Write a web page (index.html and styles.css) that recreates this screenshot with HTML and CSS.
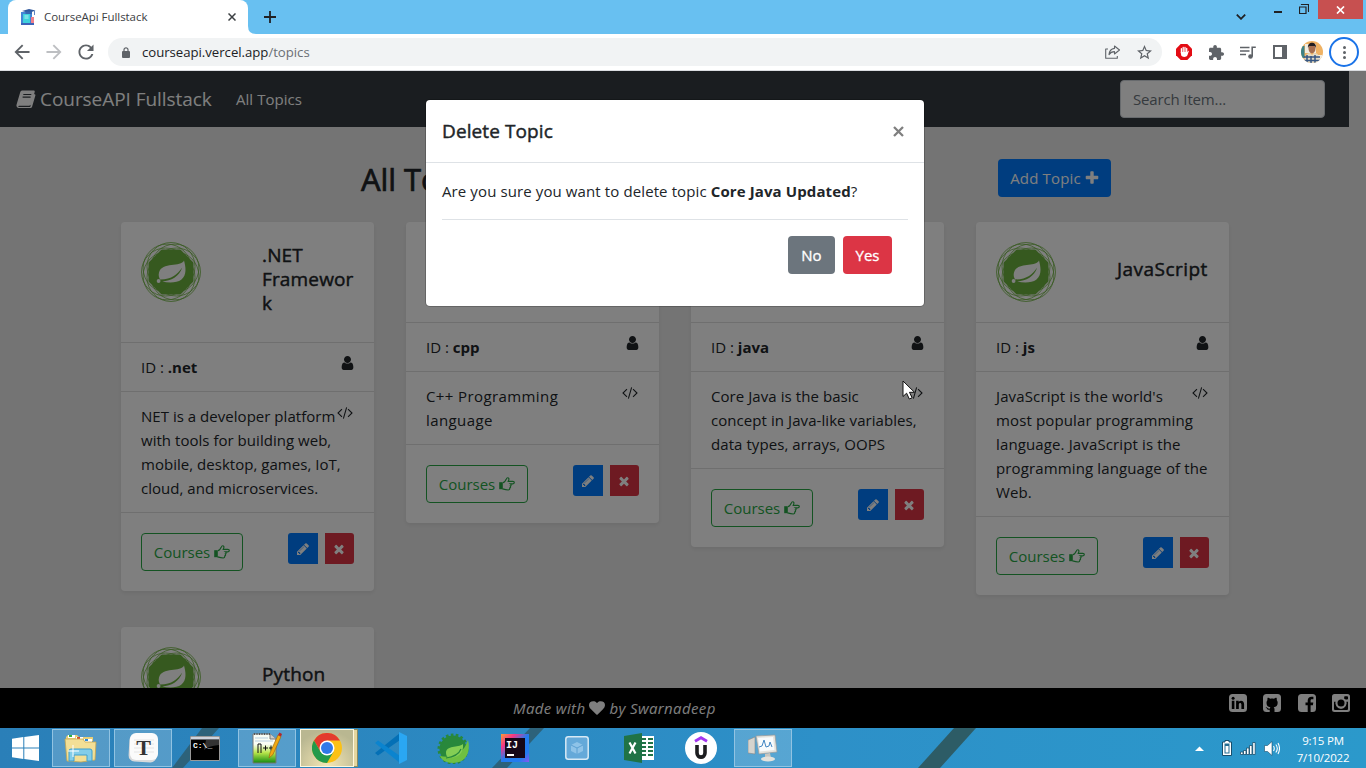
FILE: index.html
```html
<!DOCTYPE html>
<html lang="en">
<head>
<meta charset="utf-8">
<title>CourseApi Fullstack</title>
<link rel="stylesheet" href="styles.css">
</head>
<body>
<svg class="sprite" aria-hidden="true">
  <symbol id="times" viewBox="0 0 1792 1792"><path d="M1490 1322q0 40-28 68l-136 136q-28 28-68 28t-68-28l-294-294-294 294q-28 28-68 28t-68-28l-136-136q-28-28-28-68t28-68l294-294-294-294q-28-28-28-68t28-68l136-136q28-28 68-28t68 28l294 294 294-294q28-28 68-28t68 28l136 136q28 28 28 68t-28 68l-294 294 294 294q28 28 28 68z"/></symbol>
  <symbol id="plus" viewBox="0 0 1792 1792"><path d="M1600 736v192q0 40-28 68t-68 28h-416v416q0 40-28 68t-68 28h-192q-40 0-68-28t-28-68v-416h-416q-40 0-68-28t-28-68v-192q0-40 28-68t68-28h416v-416q0-40 28-68t68-28h192q40 0 68 28t28 68v416h416q40 0 68 28t28 68z"/></symbol>
  <symbol id="user" viewBox="256 128 1280 1536"><path d="M1536 1399q0 109-62.5 187t-150.5 78h-854q-88 0-150.5-78t-62.5-187q0-85 8.5-160.5t31.5-152 58.5-131 94-89 134.5-34.5q131 128 313 128t313-128q76 0 134.5 34.5t94 89 58.5 131 31.5 152 8.5 160.5zm-256-887q0 159-112.5 271.5t-271.5 112.5-271.5-112.5-112.5-271.5 112.5-271.5 271.5-112.5 271.5 112.5 112.5 271.5z"/></symbol>
  <symbol id="pencil" viewBox="0 0 1792 1792"><path d="M491 1536l91-91-235-235-91 91v107h128v128h107zm523-928q0-22-22-22-10 0-17 7l-542 542q-7 7-7 17 0 22 22 22 10 0 17-7l542-542q7-7 7-17zm-54-192l416 416-832 832h-416v-416zm683 96q0 53-37 90l-166 166-416-416 166-165q36-38 90-38 53 0 91 38l235 234q37 39 37 91z"/></symbol>
  <symbol id="code" viewBox="64 256 1920 1408"><path d="M681 1399l-50 50q-10 10-23 10t-23-10l-466-466q-10-10-10-23t10-23l466-466q10-10 23-10t23 10l50 50q10 10 10 23t-10 23l-393 393 393 393q10 10 10 23t-10 23zm591-1067l-373 1291q-4 13-15.5 19.5t-23.5 2.5l-62-17q-13-4-19.5-15.5t-2.5-24.5l373-1291q4-13 15.5-19.5t23.5-2.5l62 17q13 4 19.5 15.5t2.5 24.5zm657 651l-466 466q-10 10-23 10t-23-10l-50-50q-10-10-10-23t10-23l393-393-393-393q-10-10-10-23t10-23l50-50q10-10 23-10t23 10l466 466q10 10 10 23t-10 23z"/></symbol>
  <symbol id="heart" viewBox="0 128 1792 1536"><path d="M896 1664q-26 0-44-18l-624-602q-10-8-27.5-26t-55.5-65.5-68-97.5-53.5-121-23.5-138q0-220 127-344t351-124q62 0 126.5 21.5t120 58 95.5 68.5 76 68q36-36 76-68t95.5-68.5 120-58 126.5-21.5q224 0 351 124t127 344q0 221-229 450l-623 600q-18 18-44 18z"/></symbol>
  <symbol id="hand" viewBox="0 0 16 14"><path d="M.2 5.2h3.6v7H.2z"/><path d="M4 5.6c1.6 0 2.6-2 3.2-3.3C7.600 1 8 .7 8.700.7c1.200 0 1.500 1.200 1 2.400l-.5 1.200h4.700c1.900 0 1.900 2.500 0 2.500h-2.500c1.100.7.8 2-.1 2.200.6.9.2 1.800-.6 2 .3 1.200-.4 2-1.500 2-2 0-2.700-.2-5.700-1.100" fill="none" stroke="#28a745" stroke-width="1.150"/></symbol>
  <symbol id="spring" viewBox="0 0 60 60">
    <g fill="none" stroke="#6db33f" stroke-width=".75"><circle cx="30" cy="24.500" r="24"/><circle cx="33.900" cy="26.100" r="24"/><circle cx="35.500" cy="30" r="24"/><circle cx="33.900" cy="33.900" r="24"/><circle cx="30" cy="35.500" r="24"/><circle cx="26.100" cy="33.900" r="24"/><circle cx="24.500" cy="30" r="24"/><circle cx="26.100" cy="26.100" r="24"/></g>
    <path fill="#6db33f" d="M21 8.500h18L51.500 21v18L39 51.500H21L8.500 39V21z" stroke="#6db33f" stroke-width="2" stroke-linejoin="round"/>
    <path fill="#fff" d="M43 18.500c-3 7-22 1-25 12-.8 3 .1 5.500 1.200 7 12-.2 17-5 22-12-3 9-11 13.500-20 14 7 1.500 15 1.200 19-1.800 6-4.500 4.500-13 2.800-19.200z"/><circle cx="17.600" cy="39" r="1.900" fill="#fff"/>
  </symbol>
</svg>

<div class="screen">
<header class="tabstrip">
  <div class="tab">
    <svg width="16" height="18" viewBox="0 0 16 18"><path d="M1 4h11v13H1z" fill="#4285d6"/><path d="M3 6h7v9H3z" fill="#3fd0dc"/><path d="M4.500 7.500h4v1h-4zM4.500 9.500h4v1h-4z" fill="#b6f1f2"/><path d="M11 9h3v7h-3z" fill="#ee7f8b"/><path d="M1 15h13v2H1z" fill="#3d63b8"/><path d="M2 3 9 1l6.500 1.500L9 5z" fill="#30599e"/><path d="M5.500 3.500H12v2.500H5.500zM14 3h.8v4H14z" fill="#3566b2"/></svg>
    <span class="tab-title">CourseApi Fullstack</span>
    <svg class="tab-close" width="8" height="8" viewBox="0 0 8 8"><path d="M.5.5l7 7m0-7l-7 7" stroke="#3c4043" stroke-width="1.500"/></svg>
  </div>
  <svg class="flare" width="8" height="8" viewBox="0 0 8 8"><path d="M0 0v8h8Q0 8 0 0z" fill="#fff"/></svg>
  <svg class="newtab" width="12" height="12" viewBox="0 0 12 12"><path d="M6 0v12M0 6h12" stroke="#202124" stroke-width="1.800"/></svg>
  <div class="winctl">
    <svg width="10" height="6" viewBox="0 0 10 6"><path d="M.8.6 5 4.800 9.200.6" fill="none" stroke="#202124" stroke-width="1.800"/></svg>
    <i class="min"></i>
    <svg class="restore" width="10" height="10" viewBox="0 0 10 10"><path d="M.5 3h6.500v6.500H.5zM2.500 1V.5h7v7H9" fill="none" stroke="#202124" stroke-width="1.200"/></svg>
    <div class="winclose"><svg width="9" height="8" viewBox="0 0 9 8"><path d="M1 .5l7 7m0-7l-7 7" stroke="#fff" stroke-width="1.700"/></svg></div>
  </div>
</header>
<div class="toolbar">
  <svg class="nav-i" viewBox="3.500 3.500 17 17"><path fill="#5f6368" d="M20 11H7.830l5.590-5.590L12 4l-8 8 8 8 1.410-1.410L7.830 13H20v-2z"/></svg>
  <svg class="nav-i" viewBox="3.500 3.500 17 17"><path fill="#bdbfc2" d="M4 11h12.170l-5.590-5.590L12 4l8 8-8 8-1.410-1.410L16.170 13H4v-2z"/></svg>
  <svg class="nav-i" viewBox="3.500 3.500 17 17"><path fill="#5f6368" d="M17.650 6.350C16.200 4.900 14.210 4 12 4c-4.420 0-7.990 3.580-7.990 8s3.570 8 7.990 8c3.730 0 6.840-2.550 7.730-6h-2.080c-.82 2.330-3.040 4-5.650 4-3.310 0-6-2.690-6-6s2.690-6 6-6c1.660 0 3.140.69 4.220 1.780L13 11h7V4l-2.350 2.350z"/></svg>
  <div class="omnibox">
    <svg width="8" height="11" viewBox="0 0 8 11"><rect y="4" width="8" height="7" rx="1" fill="#5f6368"/><path d="M2 5V2.800a2 2 0 0 1 4 0V5" fill="none" stroke="#5f6368" stroke-width="1.200"/></svg>
    <span class="url">courseapi.vercel.app<span class="path">/topics</span></span>
    <svg class="share" width="16" height="14" viewBox="0 0 16 14"><path d="M3 4H.7v9.300h11.600V11M9.500 1l5 4-5 4V6.600C7 6.600 5.200 7.600 4 9.600c.3-3.300 2.200-5.700 5.500-6.200z" fill="none" stroke="#5f6368" stroke-width="1.100" stroke-linejoin="round"/></svg>
    <svg width="15" height="15" viewBox="2 2 20 20"><path fill="#5f6368" d="M22 9.240l-7.190-.62L12 2 9.190 8.630 2 9.240l5.460 4.730L5.820 21 12 17.270 18.180 21l-1.630-7.030L22 9.240zM12 15.400l-3.760 2.270 1-4.280-3.320-2.880 4.380-.38L12 6.100l1.710 4.040 4.380.38-3.320 2.880 1 4.280L12 15.400z"/></svg>
  </div>
  <div class="exts">
    <svg width="16" height="16" viewBox="0 0 16 16"><path fill="#e30c14" d="M4.700 0h6.600L16 4.700v6.600L11.300 16H4.700L0 11.300V4.700z"/><path d="M5.400 9V4.700M7.200 8V3.400M9 8V3.400M10.700 9V4.500" stroke="#fff" stroke-width="1.300" stroke-linecap="round"/><path d="M4.800 8h6.600l.7-1.300.8.400-1.500 4.200c-.8 2-5 2.200-6.200.2z" fill="#fff"/></svg>
    <svg width="15" height="15" viewBox="2 1 21 21"><path fill="#5f6368" d="M20.500 11H19V7c0-1.100-.9-2-2-2h-4V3.500C13 2.120 11.880 1 10.500 1S8 2.120 8 3.500V5H4c-1.100 0-1.990.9-1.990 2v3.800H3.500c1.490 0 2.700 1.210 2.700 2.700s-1.210 2.700-2.700 2.700H2V20c0 1.100.9 2 2 2h3.800v-1.500c0-1.490 1.210-2.700 2.700-2.700 1.490 0 2.700 1.210 2.700 2.700V22H17c1.100 0 2-.9 2-2v-4h1.500c1.380 0 2.500-1.120 2.500-2.500S21.880 11 20.500 11z"/></svg>
    <svg width="16" height="13" viewBox="0 0 16 13"><path d="M0 1.500h9.500M0 5h9.500M0 8.500h6M12.200 10.500V1.300h3.600" fill="none" stroke="#5f6368" stroke-width="1.600"/><circle cx="10.500" cy="10.500" r="2.300" fill="#5f6368"/></svg>
    <svg width="14" height="14" viewBox="0 0 14 14"><path fill="#5f6368" fill-rule="evenodd" d="M0 0h14v14H0zM2 2v10h7V2z"/></svg>
    <svg width="22" height="22" viewBox="0 0 22 22"><clipPath id="av"><circle cx="11" cy="11" r="11"/></clipPath><g clip-path="url(#av)"><path fill="#efb264" d="M0 0h22v22H0z"/><path fill="#3b8287" d="M0 5h3.500v12H0z"/><path fill="#f2ede1" d="M4 3h11v9H4zM16 14h6v8h-6z"/><ellipse cx="11" cy="7.500" rx="3.500" ry="4.800" fill="#a56e50"/><path d="M7 7c-1-7 9-7 8 0l-1-2H8z" fill="#221d20"/><path d="M3 22c0-7 3-10 6-10l2 2 2-2c4 0 6 3 6 10z" fill="#e4dbc4"/><path d="M6 14v8M10 15v7M14 14v8M3 16h16M3 19.500h16" stroke="#375783" stroke-width="1.500"/></g></svg>
    <div class="kebab"><i></i><i></i><i></i></div>
  </div>
</div>

<main class="page">
  <nav class="navbar">
    <svg width="20" height="18" viewBox="0 0 20 18"><path fill="#fff" d="M6.200.5h11.300c1 0 1.500.6 1.200 1.600L15.200 14c-.4 1.200-1 1.700-2.200 1.700H3.200c-1.200 0-1.500 1.200 0 1.200h11L18 4.500l.8-.5c.6.500.8 1 .5 1.800L16 17c-.3.700-.8 1-1.600 1H3C.9 18 0 16 .6 14.500L4 3C4.500 1.300 5 .5 6.200.5z"/><path d="M7.300 4.500h8M6.600 7.200h8" stroke="#343a40" stroke-width="1.200"/></svg>
    <span class="brand">CourseAPI Fullstack</span>
    <span class="navlink">All Topics</span>
    <div class="search"><span>Search Item...</span></div>
  </nav>
  <div class="titlebar">
    <h1>All Topics</h1>
    <div class="btn add"><span>Add Topic</span><svg width="16" height="16"><use href="#plus"/></svg></div>
  </div>
  <div class="grid">
    <article class="card">
      <div class="head"><svg class="logo"><use href="#spring"/></svg><h5>.NET<br>Framewor<br>k</h5></div>
      <div class="item"><svg class="u"><use href="#user"/></svg>ID : <b>.net</b></div>
      <div class="item net"><svg class="c"><use href="#code"/></svg>NET is a developer platform<br>with tools for building web,<br>mobile, desktop, games, IoT,<br>cloud, and microservices.</div>
      <div class="acts"><div class="btn go"><span>Courses</span><svg><use href="#hand"/></svg></div><div class="sq edit"><svg><use href="#pencil"/></svg></div><div class="sq del"><svg><use href="#times"/></svg></div></div>
    </article>
    <article class="card">
      <div class="head"><svg class="logo"><use href="#spring"/></svg></div>
      <div class="item"><svg class="u"><use href="#user"/></svg>ID : <b>cpp</b></div>
      <div class="item cpp"><svg class="c"><use href="#code"/></svg>C++ Programming<br>language</div>
      <div class="acts"><div class="btn go"><span>Courses</span><svg><use href="#hand"/></svg></div><div class="sq edit"><svg><use href="#pencil"/></svg></div><div class="sq del"><svg><use href="#times"/></svg></div></div>
    </article>
    <article class="card">
      <div class="head"><svg class="logo"><use href="#spring"/></svg></div>
      <div class="item"><svg class="u"><use href="#user"/></svg>ID : <b>java</b></div>
      <div class="item java"><svg class="c"><use href="#code"/></svg>Core Java is the basic<br>concept in Java-like variables,<br>data types, arrays, OOPS</div>
      <div class="acts"><div class="btn go"><span>Courses</span><svg><use href="#hand"/></svg></div><div class="sq edit"><svg><use href="#pencil"/></svg></div><div class="sq del"><svg><use href="#times"/></svg></div></div>
    </article>
    <article class="card">
      <div class="head js"><svg class="logo"><use href="#spring"/></svg><h5>JavaScript</h5></div>
      <div class="item"><svg class="u"><use href="#user"/></svg>ID : <b>js</b></div>
      <div class="item script"><svg class="c"><use href="#code"/></svg>JavaScript is the world's<br>most popular programming<br>language. JavaScript is the<br>programming language of the<br>Web.</div>
      <div class="acts"><div class="btn go"><span>Courses</span><svg><use href="#hand"/></svg></div><div class="sq edit"><svg><use href="#pencil"/></svg></div><div class="sq del"><svg><use href="#times"/></svg></div></div>
    </article>
    <article class="card">
      <div class="head"><svg class="logo"><use href="#spring"/></svg><h5>Python</h5></div>
    </article>
  </div>
  <footer class="footer">
    <em class="made"><span>Made with</span><svg width="16" height="14"><use href="#heart"/></svg><span>by Swarnadeep</span></em>
    <div class="social">
      <svg viewBox="0 0 18 18"><rect width="18" height="18" rx="3.500" fill="#fff"/><circle cx="4.100" cy="4.200" r="1.500"/><path d="M2.800 6.800h2.600V15H2.800zM7.100 6.800h2.600v1.100c1.500-2.200 5.400-1.400 5.400 2.200V15h-2.700v-4.500c0-2.200-2.600-2-2.600 0V15H7.100z"/></svg>
      <svg viewBox="0 0 18 18"><rect width="18" height="18" rx="3.500" fill="#fff"/><path d="M6.700 18v-2.200c-1.800.2-2.500-.6-3-1.600-.3-.6-.7-.9-1.200-1.200 1.600-.3 2 1.300 3 1.600.6.200 1 0 1.300-.2.100-.6.400-1 .7-1.200C4.700 12.900 3.500 11.700 3.500 8.800c0-1.200.4-2.100 1-2.700-.2-.8-.2-1.600.2-2.400 1.100 0 1.900.5 2.600 1 1.200-.3 2.400-.3 3.600 0 .7-.5 1.500-1 2.600-1 .4.800.4 1.600.2 2.400.6.600 1 1.500 1 2.700 0 2.900-1.400 4.100-4 4.400.5.400.8 1 .8 2V18z"/></svg>
      <svg viewBox="0 0 18 18"><rect width="18" height="18" rx="3.500" fill="#fff"/><path d="M9.700 18v-6.800H7.500V8.500h2.200V6.600c0-2.600 1.600-3.900 3.700-3.900l2 .1v2.400H14c-1.200 0-1.400.6-1.400 1.400v1.900h2.700l-.4 2.700h-2.300V18z"/></svg>
      <svg viewBox="0 0 18 18"><rect width="18" height="18" rx="2.500" fill="#fff"/><path d="M2 7.700h1.700a5.500 5.500 0 1 0 10.600 0H16V15q0 1-1 1H3q-1 0-1-1zM12.900 2.200h2.200q.9 0 .9.900v1.700q0 .7-.9.700h-2.200q-.7 0-.7-.7V2.900q0-.7.700-.7z"/><circle cx="9" cy="9" r="5.400" fill="#fff"/><circle cx="9" cy="9" r="3.500"/></svg>
    </div>
  </footer>
  <div class="backdrop"></div>
  <section class="modal">
    <div class="mhead"><h5>Delete Topic</h5><svg width="11" height="11" viewBox="0 0 11 11"><path d="M1 1l9 9m0-9l-9 9" stroke="#7f7f7f" stroke-width="2.300"/></svg></div>
    <div class="mbody">
      <p>Are you sure you want to delete topic <b>Core Java Updated</b>?</p>
      <div class="mfoot"><div class="btn no">No</div><div class="btn yes">Yes</div></div>
    </div>
  </section>
  <svg class="cursor" width="14" height="21" viewBox="0 0 14 21"><path d="M1 1v15.500l3.600-3.300L7.300 19l2.800-1.200L7.500 12.300h5z" fill="#fff" stroke="#111" stroke-width="1"/></svg>
</main>

<footer class="taskbar">
  <svg class="wallpaper" width="1366" height="40" viewBox="0 0 1366 40"><path fill="#2d627a" d="M202 0h17l-36 40h-11zM530 0h14l-37 40h-15z"/><path fill="#2d5c66" d="M954 0h22l-36 40h-22z"/></svg>
  <div class="start"><svg width="27" height="26" viewBox="0 0 27 26"><path fill="#fff" d="M0 3.700l11.300-1.600v10.400H0zM12.300 2 27 0v12.500H12.300zM0 13.500h11.300v10.400L0 22.300zM12.300 13.500H27V26l-14.700-2z"/></svg></div>
  <div class="tb on"><svg width="34" height="30" viewBox="0 0 34 30"><path d="M2 4l2-2h9l2 2h14v4H2z" fill="#e8cf78"/><path d="M4 2h7v3H4z" fill="#fff"/><path d="M5 2h3v2H5z" fill="#2fb13d"/><path d="M12 4h7v3h-7z" fill="#fff"/><path d="M13 4h3v2h-3z" fill="#d44a29"/><path d="M20 6h8v3h-8z" fill="#fff"/><path d="M21 6h3v2h-3z" fill="#2c8bd8"/><path d="M1 6h18l2 3h11l-1 18-14 2-14-1z" fill="#f3df96" stroke="#c7a750" stroke-width=".8"/><path d="M5 28V18q0-2 2-2h19q2 0 2 2v10h-5v-6H10v6z" fill="#83cde9" stroke="#3e9fcf"/><path d="M9 12v12M4 18h11" stroke="#fff"/></svg></div>
  <div class="tb on"><svg width="31" height="30" viewBox="0 0 31 30"><rect x="1" y="2" width="28" height="27" rx="6" fill="#d9dadb" transform="rotate(3 15 15)"/><rect x="2" y="0" width="28" height="27" rx="6" fill="#fbfbfb"/><path d="M6 7h20M6 11h20M6 15h20M6 19h20" stroke="#e5e5e5"/><text x="15.500" y="21.500" text-anchor="middle" class="typora">T</text></svg></div>
  <div class="tb"><svg width="30" height="25" viewBox="0 0 30 25"><path d="M.5.5h29v24H.5z" fill="#000" stroke="#999"/><path d="M1 1h28v2.500H1z" fill="#cdd3dd"/><path d="M16 4h13v5Q18 10 14 14z" fill="#333"/><text x="3" y="11.500" class="cmd">C:\_</text></svg></div>
  <div class="tb on"><svg width="31" height="33" viewBox="0 0 31 33"><defs><linearGradient id="np" x2="0" y2="1"><stop offset=".35" stop-color="#fafdf5"/><stop offset=".65" stop-color="#b7e44a"/><stop offset="1" stop-color="#138a10"/></linearGradient></defs><path d="M1 2h17l6 5v24H1z" fill="url(#np)" stroke="#777"/><path d="M18 2v5h6" fill="#ccc" stroke="#777"/><path d="M2 2h16" stroke="#555" stroke-width="2" stroke-dasharray="1 1.500"/><path d="M3 6h13M3 9h18" stroke="#b8cfe0"/><path d="M6 21v-9h3v9M11 16h5m-2.500-2.500v5M17 16h4m-2-2.500v5" fill="none" stroke="#111"/><path d="M17 26l1-5L26 3l3 1.500-8 18z" fill="#f1a914" stroke="#9c6a13" stroke-width=".7"/><path d="M26 3l1.500-2.500L30 2l-1 2.500z" fill="#b3262b"/></svg></div>
  <div class="tb chrome"><svg width="30" height="30" viewBox="0 0 30 30"><circle cx="15" cy="15" r="15" fill="#fbc116"/><path d="M15 15 2 7.500A15 15 0 0 1 28 7.500H15z" fill="#e33b2e"/><path d="M2 7.500 8.500 18.700 15 7.500z" fill="#e33b2e"/><path d="M2 7.500A15 15 0 0 0 15 30l6.500-11.200h-13z" fill="#239a4b"/><circle cx="15" cy="15" r="7.500" fill="#fff"/><circle cx="15" cy="15" r="6" fill="#2f79e8"/></svg></div>
  <div class="tb"><svg width="32" height="32" viewBox="0 0 32 32"><path d="M0 21l3 2.500L25 8V1z" fill="#0470b6"/><path d="M0 11l3-2.500L25 24v7z" fill="#0b84cf"/><path d="M24 0l8 4v24l-8 4z" fill="#2aa7f3"/></svg></div>
  <div class="tb"><svg width="32" height="32" viewBox="0 0 32 32"><circle cx="16" cy="17" r="13.500" fill="#28883c"/><circle cx="16" cy="17" r="13.500" fill="none" stroke="#28883c" stroke-width="4" stroke-dasharray="2.500 2.200"/><path d="M31 8c3 12-2 23-15 23C8 31 4 27 3 24c13 3 24-3 28-16z" fill="#6fc042"/><path d="M26 12c-5 4-17 1-17 9 0 2 1 4 3 5 9 0 15-5 14-14z" fill="#84ce54"/><path d="M9 26c8-1 13-4 15-9" fill="none" stroke="#28883c" stroke-width="1.200"/></svg></div>
  <div class="tb"><svg width="28" height="28" viewBox="0 0 28 28"><defs><linearGradient id="ij" y2="1"><stop stop-color="#fc9a36"/><stop offset=".25" stop-color="#f43686"/><stop offset=".5" stop-color="#237cf0"/><stop offset=".8" stop-color="#237cf0"/><stop offset="1" stop-color="#8a55f2"/></linearGradient></defs><path d="M0 0h28v28H0z" fill="url(#ij)"/><path d="M4 4h20v20H4z" fill="#160718"/><path d="M6 20h7v2H6z" fill="#fff"/><text x="5" y="14" class="ij">IJ</text></svg></div>
  <div class="tb"><svg width="24" height="24" viewBox="0 0 24 24"><rect x=".8" y=".8" width="22.400" height="22.400" rx="2.500" fill="#64a9d9" stroke="#d6e9f5" stroke-width="1.500"/><path d="M12 6l6 3v6l-6 3-6-3V9z" fill="#8ec3e8"/><path d="M6 9l6 3 6-3M12 12v6" fill="none" stroke="#5ba0d2"/></svg></div>
  <div class="tb"><svg width="30" height="30" viewBox="0 0 30 30"><path d="M16 3h14v24H16z" fill="#fff"/><path d="M18 5h4v2h-4zM24 5h5v2h-5zM18 9h4v2h-4zM24 9h5v2h-5zM18 13h4v2h-4zM24 13h5v2h-5zM18 17h4v2h-4zM24 17h5v2h-5zM18 21h4v2h-4zM24 21h5v2h-5z" fill="#207346"/><path d="M0 3l18-3v30L0 27z" fill="#207346"/><path d="M5.500 9.500l6 11m0-11l-6 11" stroke="#fff" stroke-width="2.200"/></svg></div>
  <div class="tb"><svg width="32" height="32" viewBox="0 0 32 32"><circle cx="16" cy="16" r="16" fill="#fff"/><path d="M10 9.200l6-3.500 6 3.500" fill="none" stroke="#a435f0" stroke-width="2.800"/><path d="M12 13v8c0 5.500 8 5.500 8 0v-8" fill="none" stroke="#1c1d1f" stroke-width="3.600"/></svg></div>
  <div class="tb on"><svg width="30" height="28" viewBox="0 0 30 28"><path d="M0 6l7-3v17l-7-1z" fill="#d6d4ce" stroke="#888" stroke-width=".6"/><path d="M8 2l19-1 2 17-18 2z" fill="#e5e3dd" stroke="#999" stroke-width=".7"/><path d="M10 4l15-1 1.500 13L12 17.500z" fill="#f8fbfd"/><path d="M11 13l3-1 2-6 2 7 3-1 1-4 2 5" fill="none" stroke="#4386c3"/><path d="M17 20l5-1 1 5h-6z" fill="#c7c5bf"/><ellipse cx="20" cy="25" rx="7" ry="2.500" fill="#e4e2dc"/></svg></div>
  <div class="tray">
    <svg width="9" height="5" viewBox="0 0 9 5"><path d="M0 5l4.500-4.500L9 5z" fill="#fff"/></svg>
    <svg class="bat" width="10" height="16" viewBox="0 0 10 16"><path d="M3 .5h4V2h2.500v13.500h-9V2H3z" fill="#fff" stroke="#174e6c"/><path d="M2.500 3.500h5v10h-5z" fill="#246d92"/><path d="M3.500 6h3v6.500h-3z" fill="#fff"/></svg>
    <svg class="sig" width="16" height="13" viewBox="0 0 16 13"><path stroke="#174e6c" stroke-width=".8" fill="#fff" d="M.5 10h2.500v2.500H.5zM3.500 8.500H6v4H3.500zM6.500 6H9v6.500H6.500zM9.500 3.500H12v9H9.500zM12.700.5h2.500v12h-2.500z"/></svg>
    <svg class="vol" width="16" height="15" viewBox="0 0 16 15"><path d="M.5 4.500h3L8 .5v14l-4.500-4h-3z" fill="#fff" stroke="#174e6c" stroke-width=".6"/><path d="M9.500 5q1.500 2.500 0 5M11.800 3.500q3 4 0 8M14 2q3 5.500 0 11" fill="none" stroke="#fff" stroke-width="1.100"/></svg>
    <div class="clock"><span class="time">9:15 PM</span><span class="date">7/10/2022</span></div>
  </div>
</footer>
</div>
</body>
</html>
```

FILE: styles.css
```css
* { box-sizing: border-box; }
body { margin: 0; overflow: hidden; font: 15px/24px "Open Sans", "Noto Sans", sans-serif; color: #212529; }
svg { display: block; flex: none; }
h1, h5, p { margin: 0; }
.sprite { position: absolute; width: 0; height: 0; }
.screen { display: flex; flex-direction: column; width: 1366px; height: 768px; }

/* Browser tab strip */
.tabstrip { display: flex; height: 34px; background: #68c0f1; flex: none; }
.tab { display: flex; align-items: center; width: 240px; margin-left: 8px; padding: 0 12px; background: #fff; border-radius: 8px 8px 0 0; }
.tab-title { margin-left: 8px; flex: 1; font-size: 11.500px; letter-spacing: -.05px; color: #3c4043; white-space: nowrap; }
.flare { align-self: flex-end; }
.newtab { margin: 11px 0 0 8px; }
.winctl { display: flex; margin-left: auto; }
.winctl > svg:first-child { margin-top: 14px; }
.min { width: 8px; height: 2px; margin: 11px 0 0 28px; background: #202124; }
.restore { margin: 4px 0 0 17px; }
.winclose { display: flex; width: 45px; height: 19px; margin-left: 9px; margin-right: 3px; background: #c75050; align-items: center; justify-content: center; }

/* Address bar */
.toolbar { display: flex; align-items: center; height: 37px; background: #fff; border-bottom: 1px solid #dadce0; flex: none; padding-left: 14px; }
.nav-i { width: 16px; height: 16px; margin-right: 16px; }
.omnibox { display: flex; align-items: center; width: 1054px; height: 28px; margin-left: -2px; padding: 0 10px 0 14px; border-radius: 14px; background: #f1f3f4; }
.url { flex: 1; margin-left: 12px; font-size: 13.200px; letter-spacing: -.03px; color: #202124; white-space: nowrap; }
.path { color: #6b6f74; }
.share { margin-right: 16px; }
.exts { display: flex; align-items: center; gap: 17px; margin-left: 14px; }
.exts > svg:nth-child(3) { margin-left: -1px; }
.exts > svg:nth-child(5) { margin-left: -3px; }
.kebab { display: flex; flex-direction: column; align-items: center; justify-content: center; gap: 2px; width: 30px; height: 30px; margin-left: -11px; border: 2px solid #1a73e8; border-radius: 50%; }
.kebab i { width: 3px; height: 3px; border-radius: 50%; background: #5f6368; }

/* Page */
.page { position: relative; flex: none; height: 657px; overflow: hidden; background: #e9e9e9; }
.navbar { display: flex; align-items: center; width: 1349px; height: 56px; padding: 0 24px 0 16px; background: #343a40; color: #fff; }
.brand { width: 172px; margin-left: 4px; font-size: 19px; letter-spacing: -.05px; white-space: nowrap; }
.navlink { margin-left: 24px; letter-spacing: .05px; }
.search { display: flex; align-items: center; width: 205px; height: 38px; margin-left: auto; padding: 0 12px; border: 1px solid #ced4da; border-radius: 4px; background: #fff; color: #6c757d; letter-spacing: -.15px; }
.titlebar { display: flex; padding: 32px 0 0 361px; height: 95px; }
h1, h5 { font-weight: 400; -webkit-text-stroke: .45px currentColor; }
h1 { width: 637px; font-size: 31px; line-height: 40px; letter-spacing: -.1px; -webkit-text-stroke-width: .7px; }
.btn { display: flex; align-items: center; justify-content: center; height: 38px; border-radius: 4px; color: #fff; white-space: nowrap; }
.add { width: 113px; gap: 3px; background: #007bff; letter-spacing: .15px; }
.add span { margin-left: 1px; }
.add svg { fill: #fff; }
.grid { position: relative; display: grid; grid-template-columns: repeat(4, 253px); gap: 32px; align-items: start; padding-left: 121px; }
.card { background: #fff; border-radius: 4px; box-shadow: 0 2px 4px rgba(0,0,0,.075); }
.head { display: flex; align-items: center; padding: 20px; min-height: 100px; }
.logo { width: 60px; height: 60px; align-self: flex-start; }
.head h5 { margin: 1px 0 7px 61px; font-size: 19px; letter-spacing: .15px; white-space: nowrap; }
.head.js h5 { letter-spacing: .45px; }
.item { padding: 12px 20px; border-top: 1px solid #dfdfdf; white-space: nowrap; min-height: 49px; }
.net { letter-spacing: .03px; }
.cpp { letter-spacing: .4px; }
.java { letter-spacing: .07px; }
.script { letter-spacing: .13px; }
.item b, .mbody b { font-weight: 700; }
.u { float: right; width: 13px; height: 14px; margin-top: 1px; fill: #212529; }
.c { float: right; width: 16px; height: 12px; margin: 3px 1px 0 0; fill: #212529; }
.acts { display: flex; align-items: flex-start; padding: 20px; border-top: 1px solid #dfdfdf; }
.go { width: 102px; gap: 4px; margin-right: auto; border: 1px solid #28a745; color: #28a745; }
.go svg { width: 16px; height: 14px; fill: #28a745; }
.sq { display: flex; align-items: center; justify-content: center; width: 30px; height: 31px; margin-left: 7px; }
.sq svg { width: 14px; height: 14px; fill: #fff; }
.edit { background: #007bff; border-radius: 3px 0 0 3px; }
.del { width: 29px; padding-right: 2px; background: #dc3545; border-radius: 0 3px 3px 0; }

.footer { position: absolute; left: 0; right: 0; bottom: 0; height: 40px; background: #000; color: #fff; display: flex; justify-content: flex-end; }
.made { display: flex; align-items: center; gap: 4px; width: 730px; margin-right: auto; padding-left: 513px; letter-spacing: .36px; white-space: nowrap; }
.made svg { fill: #fff; }
.social { display: flex; gap: 16.300px; padding: 6px 16px 0 0; }
.social svg { width: 18px; height: 18px; }
.backdrop { position: absolute; inset: 0; background: rgba(0,0,0,.5); }

/* Confirmation dialog */
.modal { position: absolute; left: 426px; top: 29px; width: 498px; height: 206px; background: #fff; border-radius: 4px; box-shadow: 0 0 0 1px rgba(0,0,0,.2); }
.mhead { display: flex; justify-content: space-between; align-items: center; height: 63px; padding: 0 20px 0 16px; border-bottom: 1px solid #dee2e6; }
.mhead h5 { font-size: 19px; letter-spacing: .1px; }
.mbody { padding: 16px; }
.mbody p { height: 41px; border-bottom: 1px solid #dee2e6; white-space: pre; letter-spacing: .11px; }
.mfoot { display: flex; justify-content: flex-end; gap: 8px; padding: 16px 16px 0 0; -webkit-text-stroke: .3px #fff; }
.no { width: 47px; background: #6c757d; }
.yes { width: 49px; background: #dc3545; }
.cursor { position: absolute; left: 902px; top: 309px; }

/* Desktop taskbar */
.taskbar { position: relative; display: flex; align-items: stretch; flex: none; height: 40px; color: #fff; background: linear-gradient(90deg, #2a7fb8, #2d90c8 60%, #2b99cb); }
.wallpaper { position: absolute; left: 0; top: 0; }
.start, .tb, .tray { position: relative; }
.start { display: flex; align-items: center; justify-content: center; width: 50px; margin-right: 2px; }
.tb { display: flex; align-items: center; justify-content: center; width: 58px; margin: 1px 4px 1px 0; border: 1px solid transparent; }
.on { border-color: #91c3e2; background: rgba(255,255,255,.2); }
.chrome { width: 54px; margin-right: 8px; border: 1px solid #fff8de; background: radial-gradient(circle at 50% 100%, #f5e7b5, #b9b791 80%); box-shadow: 4px 0 0 -1px #e4d69f, 4px 0 0 0 #8b8b61; }
.typora { font: bold 22px "Liberation Serif", serif; fill: #333; }
.cmd { font: bold 8px "Liberation Mono", monospace; fill: #fff; }
.ij { font: bold 10px "Liberation Mono", monospace; fill: #fff; }
.tray { display: flex; align-items: center; margin-left: auto; padding-right: 16px; }
.bat { margin-left: 18px; }
.sig { margin-left: 8px; }
.vol { margin-left: 8px; }
.clock { display: flex; flex-direction: column; align-items: center; width: 54px; margin-left: 16px; padding-top: 2px; font-size: 11.500px; line-height: 17px; letter-spacing: -.2px; white-space: nowrap; }
```
